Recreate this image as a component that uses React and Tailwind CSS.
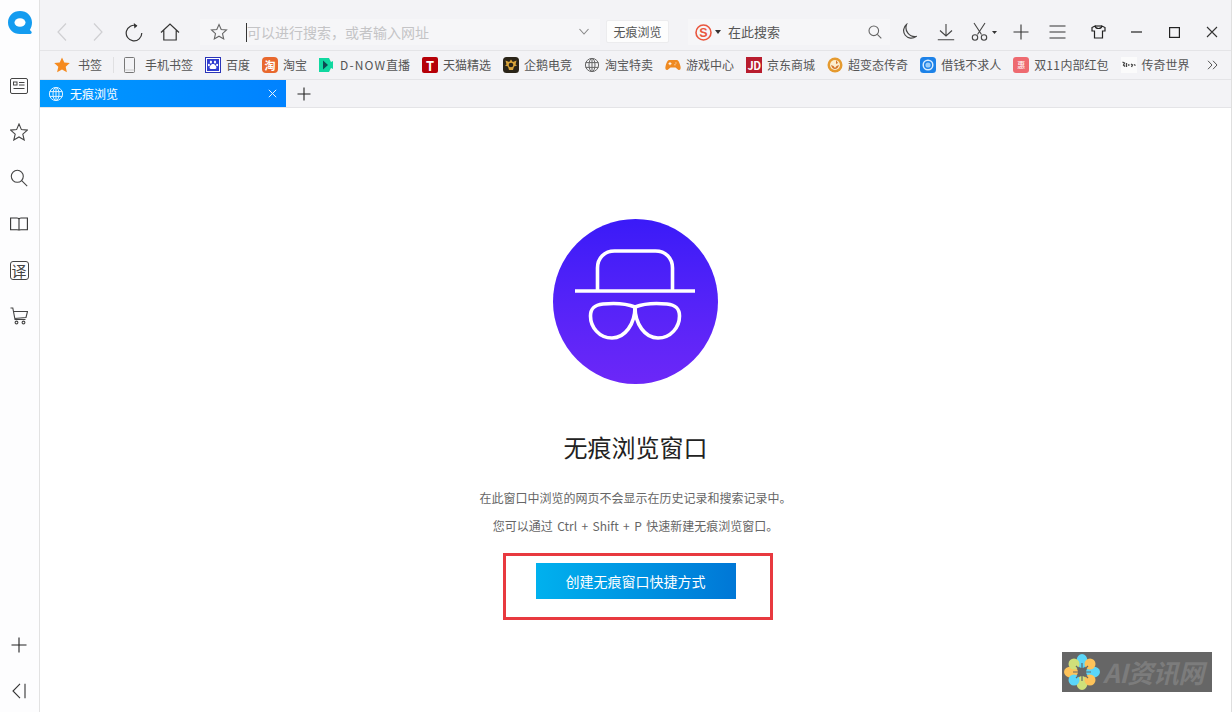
import React from "react";

const S = ({ w = 20, h = 20, children, className = "", sw = 1.2, stroke = "#3c3c3c" }) => (
  <svg width={w} height={h} viewBox={`0 0 ${w} ${h}`} fill="none" stroke={stroke} strokeWidth={sw} className={`shrink-0 ${className}`}>
    {children}
  </svg>
);

const Globe = ({ c = "#555" }) => (
  <S w={16} h={16} stroke={c} sw={1}>
    <circle cx="8" cy="8" r="6.6" />
    <ellipse cx="8" cy="8" rx="3" ry="6.6" />
    <path d="M1.6 5.6h12.8M1.6 10.4h12.8M8 1.4v13.2" />
  </S>
);

const Box = ({ bg, className = "", children }) => (
  <span className={`w-4 h-4 shrink-0 flex items-center justify-center overflow-hidden text-white leading-none ${className}`} style={{ background: bg }}>
    {children}
  </span>
);

const bookmarks = [
  { k: "phone", t: "手机书签", i: <S w={16} h={16} stroke="#777" sw={1}><rect x="0.5" y="0.5" width="10" height="15" rx="1" /><path d="M0.5 13h10" stroke="#ccc" /></S> },
  { k: "baidu", t: "百度", i: <svg width="16" height="16" viewBox="0 0 16 16" className="shrink-0"><rect width="16" height="16" fill="#2a34b8" /><rect x="1" y="1" width="14" height="14" fill="#fff" /><rect x="2" y="2" width="12" height="12" fill="#2f3cd0" /><g fill="#fff"><ellipse cx="5.9" cy="5" rx="1.1" ry="1.5" /><ellipse cx="10" cy="5" rx="1.1" ry="1.5" /><ellipse cx="3.9" cy="8" rx="1" ry="1.3" /><ellipse cx="12.1" cy="8" rx="1" ry="1.3" /><path d="M8 7c-2 0-3.6 2.4-3.4 4 .2 1.4 2 1 3.4 1s3.2.4 3.4-1C11.6 9.4 10 7 8 7z" /></g></svg> },
  { k: "taobao", t: "淘宝", i: <Box bg="#e8682e" className="rounded-[4px] text-[11px] font-bold">淘</Box> },
  { k: "dnow", t: <><span className="tracking-[1.1px]">D-NOW</span>直播</>, i: <svg width="16" height="16" viewBox="0 0 16 16" className="shrink-0 -ml-px mr-px"><rect x="1" y="1" width="14" height="14" fill="#10d8a0" /><path d="M5 3.5l5 4.500-5 4.500z" fill="#0d4a52" /><path d="M11 1h4v3l-2 1zM11 15h4v-3l-2-1z" fill="#f3f3f5" /></svg> },
  { k: "tmall", t: "天猫精选", i: <Box bg="#b60008" className="rounded-[2px] text-[13px] font-bold">T</Box> },
  { k: "esports", t: "企鹅电竞", i: <svg width="16" height="16" viewBox="0 0 16 16" className="shrink-0"><rect width="16" height="16" rx="3.5" fill="#2a2418" /><path d="M8 2.5l1.800 2.500 3.700-1.500-1 4 1.500 1-3 1-1 3.500H6l-1-3.500-3-1 1.500-1-1-4 3.700 1.500z" fill="#d9a43a" /><circle cx="8" cy="8" r="2.3" fill="#2a2418" /></svg> },
  { k: "sale", t: "淘宝特卖", i: <Globe c="#666" /> },
  { k: "game", t: "游戏中心", i: <svg width="16" height="16" viewBox="0 0 16 16" className="shrink-0"><path d="M4.5 3h7c2 0 3 2.500 4 6.500.6 2.800-.8 4.200-2.300 3.200L10.500 10.500h-5L2.800 12.700C1.300 13.700-.1 12.300.5 9.500 1.500 5.500 2.500 3 4.500 3z" fill="#ef8a22" /><path d="M5 5.200v3M3.500 6.700h3M10.500 6h.9M9.500 7.800h.9" stroke="#fff" strokeWidth="1" /></svg> },
  { k: "jd", t: "京东商城", i: <Box bg="#b81c2e" className="text-[11px] font-semibold tracking-[-0.5px]">JD</Box> },
  { k: "legend", t: "超变态传奇", i: <svg width="16" height="16" viewBox="0 0 16 16" className="shrink-0"><circle cx="8" cy="8" r="7.5" fill="#e59a2f" /><circle cx="8" cy="8" r="5" fill="#fbeecf" /><path d="M4 8c1 3 2.500 4 4 4s3-1 4-4l-2.500 1-1.500 2-1.500-2zM9 3l2 3-2 1z" fill="#d4742a" /></svg> },
  { k: "loan", t: "借钱不求人", i: <svg width="16" height="16" viewBox="0 0 16 16" className="shrink-0"><rect width="16" height="16" rx="3.5" fill="#1d82e8" /><circle cx="8" cy="8" r="4.8" fill="none" stroke="#d8ecff" strokeWidth="1.5" /><circle cx="8" cy="8" r="2.6" fill="#9ccdf8" /></svg> },
  { k: "d11", t: <>双<span className="tracking-[0.5px]">11</span>内部红包</>, i: <Box bg="#ee6a70" className="rounded-[3px] text-[8px]">惠</Box> },
  { k: "world", t: "传奇世界", i: <svg width="16" height="16" viewBox="0 0 16 16" className="shrink-0"><rect width="16" height="16" fill="#fbfbfb" /><path d="M1.5 5l2 1-1 2 1.500 1.500M5.500 6v4M7 8h1.500M10 7l1.500 1-1 2M13 7.500l1.500 1" stroke="#444" strokeWidth="1.3" fill="none" /></svg> },
];

const SideIcon = ({ children }) => <div className="w-6 h-6 flex items-center justify-center">{children}</div>;

export default function App() {
  return (
    <div className="relative flex w-[1232px] h-[712px] overflow-hidden bg-white font-['Noto_Sans_CJK_SC',sans-serif] text-[12px] text-[#444]">
      {/* sidebar */}
      <aside className="w-10 h-full shrink-0 flex flex-col items-center bg-[#fdfdfe] border-r border-[#e2e2e2] pr-px">
        <svg width="26" height="26" viewBox="0 0 26 26" className="mt-[10px] ml-[2px] shrink-0">
          <path d="M13 1C6.200 1 1 5.800 1 12.500S6.200 24 13 24h10c1.600 0 2.300-1.600 1.200-2.700l-1.400-1.400C24.200 17.900 25 15.300 25 12.500 25 5.800 19.800 1 13 1z" fill="#149cf0" />
          <ellipse cx="13" cy="12.500" rx="5.500" ry="4.300" fill="#fff" />
        </svg>
        <div className="flex flex-col items-center gap-[22px] mt-[38px]">
          <SideIcon>
            <S w={18} h={16} stroke="#444" sw={1}><rect x="0.5" y="0.5" width="17" height="15" rx="1.5" /><rect x="3.5" y="4" width="3.5" height="3" /><path d="M9 4.500h5.500M9 7h5.500M3.500 10.500h11" /></S>
          </SideIcon>
          <SideIcon>
            <S w={18} h={18} stroke="#444" sw={1.1}><path d="M9 1l2.400 5.600 6 .5-4.600 4 1.400 5.900L9 14l-5.200 3 1.400-5.900-4.600-4 6-.5z" /></S>
          </SideIcon>
          <SideIcon>
            <S w={18} h={18} stroke="#444" sw={1.1}><circle cx="7.3" cy="7.3" r="6" /><path d="M11.700 11.700l5.500 5.500" /></S>
          </SideIcon>
          <SideIcon>
            <S w={18} h={14} stroke="#333" sw={1.1}><path d="M.6 1h6.400c1.200 0 2 .5 2 1.500C9 1.500 9.800 1 11 1h6.400v11.800H11c-1.200 0-2 .3-2 .8 0-.5-.8-.8-2-.8H.6zM9 2.500v11" /></S>
          </SideIcon>
          <SideIcon>
            <span className="w-[19px] h-[19px] border border-[#444] rounded-[3px] flex items-center justify-center text-[15px] leading-none text-[#444]">译</span>
          </SideIcon>
          <SideIcon>
            <S w={18} h={18} stroke="#444" sw={1.1}><path d="M.5 1h2.300l2.200 11.500h10.500M3.500 4.500h14L16 10.500l-11.500 1" /><circle cx="6.500" cy="15.500" r="1.4" /><circle cx="13.500" cy="15.500" r="1.4" /></S>
          </SideIcon>
        </div>
        <div className="mt-auto mb-[9px] flex flex-col items-center gap-[22px]">
          <SideIcon><S w={16} h={16} stroke="#222" sw={1.1}><path d="M8 .5v15M.5 8h15" /></S></SideIcon>
          <SideIcon><S w={14} h={16} stroke="#333" sw={1.1}><path d="M8 .8L1 8l7 7.200M13 .8v14.400" /></S></SideIcon>
        </div>
      </aside>

      {/* main */}
      <div className="flex-1 flex flex-col min-w-0 border-r border-[#dfdfdf]">
        {/* toolbar */}
        <div className="h-[51px] shrink-0 bg-[#f3f3f6] border-b border-[#e4e4e7] flex items-start pt-[19px]">
          <div className="flex items-center h-[26px] ml-[4px]">
            <div className="w-[36px] flex justify-center"><S w={12} h={20} stroke="#cfcfd2" sw={1.2}><path d="M10 1.500L2 10l8 8.500" /></S></div>
            <div className="w-[36px] flex justify-center"><S w={12} h={20} stroke="#cfcfd2" sw={1.2}><path d="M2 1.500L10 10l-8 8.500" /></S></div>
            <div className="w-[36px] flex justify-center"><S w={18} h={20} stroke="#333" sw={1.2}><path d="M11.800 3.800A7.800 7.800 0 1 0 16.800 11" /><path d="M8.800 1l3.600 2.700-3 2.900" fill="#333" stroke="none" /></S></div>
            <div className="w-[36px] flex justify-center"><S w={20} h={18} stroke="#333" sw={1.2}><path d="M1 9.500L10 1l9 8.500M3.800 7.500V17h12.400V7.500" /></S></div>
          </div>
          <div className="ml-[12px] w-[400px] h-[26px] bg-[#f6f6f8] flex items-center pl-[10px]">
            <S w={18} h={18} stroke="#666" sw={1.1}><path d="M9 1.500l2.200 5 5.300.5-4 3.600 1.200 5.300L9 13.200l-4.700 2.700 1.200-5.300-4-3.600 5.300-.5z" /></S>
            <span className="w-px h-[19px] bg-[#333] ml-[18px] shrink-0" />
            <span className="text-[14px] leading-none text-[#c4c4c6] whitespace-nowrap">可以进行搜索，或者输入网址</span>
            <S w={12} h={8} stroke="#888" sw={1.1} className="ml-[149px]"><path d="M1.500 1l4.500 5 4.500-5" /></S>
          </div>
          <div className="ml-[6px] mt-px w-[63px] h-[23px] bg-white/80 border border-[#ececee] rounded-[2px] flex items-center justify-center text-[12px] leading-none text-[#555]">无痕浏览</div>
          <div className="ml-[19px] w-[202px] h-[26px] bg-[#f6f6f8] flex items-center pl-[7px]">
            <svg width="17" height="17" viewBox="0 0 17 17" className="shrink-0"><circle cx="8.500" cy="8.500" r="7.500" fill="none" stroke="#e9573f" strokeWidth="1.600" /><text x="8.500" y="13" textAnchor="middle" fontSize="12.500" fontWeight="800" fill="#e9573f" fontFamily="Liberation Sans">S</text></svg>
            <svg width="6" height="4" viewBox="0 0 6 4" className="ml-[3px] shrink-0"><path d="M0 0h6L3 4z" fill="#333" /></svg>
            <span className="ml-[7px] -mt-[2px] text-[13px] leading-none text-[#555]">在此搜索</span>
            <S w={14} h={14} stroke="#666" sw={1.1} className="ml-auto mr-[8px]"><circle cx="5.8" cy="5.8" r="4.8" /><path d="M9.300 9.300l4 4" /></S>
          </div>
          <div className="flex items-center h-[26px]">
            <S w={17} h={18} stroke="#444" sw={1.2} className="ml-[10px]"><path d="M6.500 1.500A7.500 7.500 0 1 0 16 13.500 9 9 0 0 1 6.500 1.500z" /></S>
            <S w={18} h={18} stroke="#444" sw={1.1} className="ml-[20px]"><path d="M9 1v11.500M3 7.500l6 5.500 6-5.500M.8 16.800h16.400" /></S>
            <S w={17} h={20} stroke="#444" sw={1.1} className="ml-[16px]"><path d="M3 1l7.500 11.500M14 1L6.500 12.500" /><circle cx="4" cy="15.500" r="2.700" /><circle cx="13" cy="15.500" r="2.700" /></S>
            <svg width="5" height="3" viewBox="0 0 5 3" className="ml-[4px] shrink-0"><path d="M0 0h5L2.500 3z" fill="#333" /></svg>
            <S w={16} h={16} stroke="#333" sw={1.1} className="ml-[16px]"><path d="M8 .5v15M.5 8h15" /></S>
            <S w={17} h={14} stroke="#333" sw={1.1} className="ml-[20px]"><path d="M.5 1h16M.5 7h16M.5 13h16" /></S>
            <S w={15} h={14} stroke="#222" sw={1.2} className="ml-[25px]"><path d="M4 1L1 2.500v3.500h2.500V13h8V6H14V2.500L11 1c-.5 2-1.500 2.500-3.500 2.500S4.500 3 4 1z" /><path d="M4 1h7" /></S>
            <S w={11} h={2} stroke="#222" sw={1.2} className="ml-[25px]"><path d="M0 1h11" /></S>
            <S w={11} h={11} stroke="#222" sw={1.2} className="ml-[27px]"><rect x=".6" y=".6" width="9.800" height="9.800" /></S>
            <S w={12} h={12} stroke="#333" sw={1.1} className="ml-[26px]"><path d="M1 1l10 10M11 1L1 11" /></S>
          </div>
        </div>

        {/* bookmarks */}
        <div className="h-[29px] shrink-0 bg-[#f3f3f6] border-b border-[#e4e4e7] flex items-center pl-[14px]">
          <svg width="16" height="16" viewBox="0 0 16 16" className="shrink-0"><path d="M8 .5l2.300 5 5.500.6-4.100 3.700 1.200 5.400L8 12.500l-4.900 2.700 1.200-5.400L.2 6.100l5.500-.6z" fill="#f58a1f" /></svg>
          <span className="ml-[8px] leading-none text-[#555] whitespace-nowrap">书签</span>
          <span className="w-px h-[16px] bg-[#e0e0e2] ml-[11px] mr-[10px] shrink-0" />
          <div className="flex items-center gap-3">
            {bookmarks.map((b) => (
              <div key={b.k} className="flex items-center gap-[5px] shrink-0">
                {b.i}
                <span className="leading-none text-[#555] whitespace-nowrap">{b.t}</span>
              </div>
            ))}
          </div>
          <S w={11} h={10} stroke="#555" sw={1} className="ml-[17px]"><path d="M1 .8L5 5 1 9.200M6 .8L10 5 6 9.200" /></S>
        </div>

        {/* tabs */}
        <div className="h-[28px] shrink-0 bg-[#f3f3f6] border-b border-[#e4e4e7] flex items-stretch">
          <div className="w-[246px] bg-gradient-to-r from-[#0099ff] to-[#0082ff] flex items-center pl-[8px] pr-[9px] text-white">
            <Globe c="#dff2ff" />
            <span className="ml-[6px] leading-none whitespace-nowrap">无痕浏览</span>
            <S w={9} h={9} stroke="#e8f5ff" sw={1} className="ml-auto"><path d="M.8.8l7.400 7.400M8.200.8L.8 8.200" /></S>
          </div>
          <div className="flex items-center ml-[11px]">
            <S w={14} h={14} stroke="#222" sw={1.1}><path d="M7 .5v13M.5 7h13" /></S>
          </div>
        </div>

        {/* content */}
        <main className="flex-1 flex flex-col items-center pt-[111px]">
          <div className="w-[165px] h-[165px] rounded-full bg-gradient-to-b from-[#3a1af8] to-[#6c27f8] shrink-0">
            <svg width="165" height="165" viewBox="0 0 165 165" fill="none" stroke="#fff" strokeWidth="3.6">
              <path d="M22 72h120" />
              <path d="M44.500 72V49c0-10 7-17 17-17h41c10 0 17 7 17 17v23" />
              <path d="M59 119C46 119 37.500 108 37.500 97c0-8 4-11 12.500-12 10-1 22-1 32 3 0 17-10 31-23 31z" />
              <path d="M105 119c13 0 21.500-11 21.500-22 0-8-4-11-12.500-12-10-1-22-1-32 3 0 17 10 31 23 31z" />
            </svg>
          </div>
          <h1 className="mt-[46px] text-[24px] leading-[34px] font-normal text-[#222]">无痕浏览窗口</h1>
          <p className="mt-[20px] text-[12px] leading-[28px] text-[#666] whitespace-nowrap">在此窗口中浏览的网页不会显示在历史记录和搜索记录中。</p>
          <p className="text-[12px] leading-[28px] text-[#666] whitespace-nowrap [word-spacing:1.7px]">您可以通过 Ctrl + Shift + P 快速新建无痕浏览窗口。</p>
          <div className="mt-[13px] ml-[4px] w-[270px] h-[67px] border-[3px] border-[#e8393f] flex justify-center pt-[7px] pr-[4px]">
            <button className="w-[200px] h-[36px] bg-gradient-to-r from-[#00b1ee] to-[#0077d6] text-white text-[14px] leading-none">创建无痕窗口快捷方式</button>
          </div>
        </main>
      </div>

      {/* watermark */}
      <div className="absolute left-[1062px] top-[652px] w-[150px] h-[40px] bg-[#666] flex items-center pl-[1px]">
        <svg width="38" height="38" viewBox="0 0 38 38" className="shrink-0">
          <ellipse cx="19" cy="8" rx="5.500" ry="7" fill="#5bd6f8" />
          <ellipse cx="19" cy="30" rx="5.500" ry="7" fill="#cfe07a" />
          <ellipse cx="8" cy="19" rx="7" ry="5.500" fill="#fdc35a" />
          <ellipse cx="30" cy="19" rx="7" ry="5.500" fill="#5bd6f8" />
          <ellipse cx="11" cy="11" rx="5.500" ry="5.500" fill="#cfe07a" />
          <ellipse cx="27" cy="11" rx="5.500" ry="5.500" fill="#fdc35a" />
          <ellipse cx="11" cy="27" rx="5.500" ry="5.500" fill="#5bd6f8" />
          <ellipse cx="27" cy="27" rx="5.500" ry="5.500" fill="#fdc35a" />
          <path d="M19 10v18M10 19h18M13 13l12 12M25 13L13 25" stroke="#666" strokeWidth="1.200" />
        </svg>
        <span className="ml-[2px] text-[26px] leading-none font-bold italic text-[#7c7c7c] whitespace-nowrap tracking-[-0.5px]">AI资讯网</span>
      </div>
    </div>
  );
}
